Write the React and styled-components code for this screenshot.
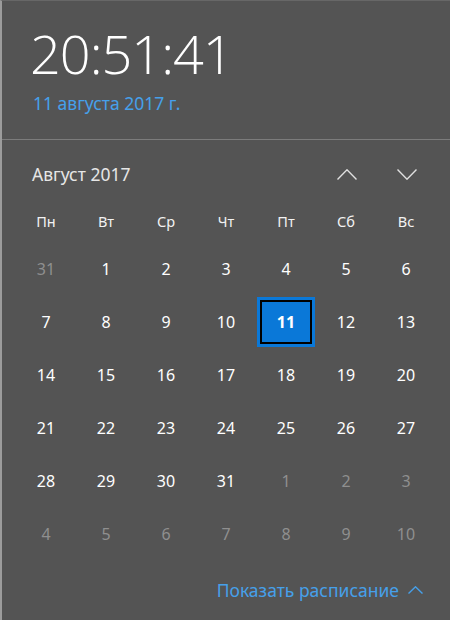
import React from "react";
import styled, { createGlobalStyle } from "styled-components";

const Global = createGlobalStyle`
  html, body { margin: 0; padding: 0; background: #545454; }
  body { font-family: "Segoe UI", "Noto Sans", "Open Sans", sans-serif; }
`;

const Panel = styled.div`
  width: 448px;
  height: 619px;
  background: #545454;
  border-left: 2px solid #9c9c9c;
  border-top: 1px solid #676767;
  display: flex;
  flex-direction: column;
  overflow: hidden;
`;

const ClockSection = styled.section`
  height: 139px;
  box-sizing: border-box;
  border-bottom: 1px solid #7c7c7c;
  padding: 22px 0 0 28px;
  display: flex;
  flex-direction: column;
`;

const Time = styled.div`
  font-family: "Open Sans", "Noto Sans", sans-serif;
  font-weight: 300;
  font-size: 54px;
  line-height: 60px;
  color: #ffffff;
  letter-spacing: -1px;
`;

const DateLink = styled.div`
  margin-top: 8px;
  padding-left: 3px;
  font-size: 17.5px;
  line-height: 24px;
  color: #46a0ea;
`;

const MonthBar = styled.div`
  display: flex;
  align-items: center;
  height: 46px;
  margin-top: 11px;
  padding: 0 13px 0 30px;
`;

const MonthTitle = styled.div`
  flex: 1;
  font-size: 17.5px;
  color: #e6e6e6;
`;

const NavButton = styled.button`
  width: 60px;
  height: 46px;
  background: none;
  border: none;
  padding: 0;
  display: flex;
  align-items: center;
  justify-content: center;
  cursor: pointer;
`;

const Grid = styled.div`
  display: grid;
  grid-template-columns: repeat(7, 60px);
  grid-template-rows: 43px repeat(6, 53px);
  padding-left: 14px;
  margin-top: 2px;
`;

const HeadCell = styled.div`
  display: flex;
  align-items: center;
  justify-content: center;
  font-size: 14.5px;
  color: #f2f2f2;
`;

const DayCell = styled.div`
  display: flex;
  align-items: center;
  justify-content: center;
  font-size: 16px;
  color: ${(p) => (p.$dim ? "#8f8f8f" : "#ffffff")};
`;

const Selected = styled.div`
  width: 58px;
  height: 50px;
  box-sizing: border-box;
  border: 3px solid #0a78d8;
  background: #000;
  padding: 2px;
  display: flex;
`;

const SelectedInner = styled.div`
  flex: 1;
  background: #0a78d8;
  display: flex;
  align-items: center;
  justify-content: center;
  color: #fff;
  font-weight: 700;
  font-size: 16px;
`;

const Spacer = styled.div`
  flex: 1;
`;

const Footer = styled.div`
  display: flex;
  justify-content: flex-end;
  align-items: center;
  gap: 9px;
  height: 40px;
  padding-right: 27px;
  margin-bottom: 10px;
  font-size: 17.5px;
  color: #46a0ea;
`;

const Chevron = ({ up, color = "#e0e0e0", w = 20, h = 11, sw = 1.4 }) => (
  <svg width={w} height={h} viewBox={`0 0 ${w} ${h}`} fill="none">
    <polyline
      points={
        up
          ? `0.5,${h - 0.5} ${w / 2},0.8 ${w - 0.5},${h - 0.5}`
          : `0.5,0.5 ${w / 2},${h - 0.8} ${w - 0.5},0.5`
      }
      stroke={color}
      strokeWidth={sw}
    />
  </svg>
);

const heads = ["Пн", "Вт", "Ср", "Чт", "Пт", "Сб", "Вс"];

const days = [
  [31, true], [1], [2], [3], [4], [5], [6],
  [7], [8], [9], [10], [11], [12], [13],
  [14], [15], [16], [17], [18], [19], [20],
  [21], [22], [23], [24], [25], [26], [27],
  [28], [29], [30], [31], [1, true], [2, true], [3, true],
  [4, true], [5, true], [6, true], [7, true], [8, true], [9, true], [10, true],
];

export default function App() {
  return (
    <>
      <Global />
      <Panel>
        <ClockSection>
          <Time>20:51:41</Time>
          <DateLink>11 августа 2017 г.</DateLink>
        </ClockSection>
        <MonthBar>
          <MonthTitle>Август 2017</MonthTitle>
          <NavButton aria-label="up">
            <Chevron up />
          </NavButton>
          <NavButton aria-label="down">
            <Chevron />
          </NavButton>
        </MonthBar>
        <Grid>
          {heads.map((h) => (
            <HeadCell key={h}>{h}</HeadCell>
          ))}
          {days.map(([d, dim], i) =>
            d === 11 && !dim ? (
              <DayCell key={i}>
                <Selected>
                  <SelectedInner>11</SelectedInner>
                </Selected>
              </DayCell>
            ) : (
              <DayCell key={i} $dim={dim}>
                {d}
              </DayCell>
            )
          )}
        </Grid>
        <Spacer />
        <Footer>
          <span>Показать расписание</span>
          <Chevron up color="#46a0ea" w={15} h={8} sw={1.4} />
        </Footer>
      </Panel>
    </>
  );
}
